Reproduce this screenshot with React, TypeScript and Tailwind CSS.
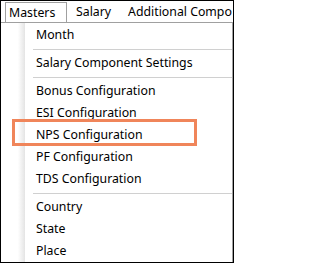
const font = { fontFamily: '"Noto Sans", "Open Sans", sans-serif' };

type Entry = { label: string } | { sep: true };

const entries: Entry[] = [
  { label: "Month" },
  { sep: true },
  { label: "Salary Component Settings" },
  { sep: true },
  { label: "Bonus Configuration" },
  { label: "ESI Configuration" },
  { label: "NPS Configuration" },
  { label: "PF Configuration" },
  { label: "TDS Configuration" },
  { sep: true },
  { label: "Country" },
  { label: "State" },
  { label: "Place" },
];

const App = () => {
  return (
    <div
      className="relative w-[234px] h-[263px] overflow-hidden bg-white border border-black text-black text-[12.3px] box-border"
      style={font}
    >
      {/* menu bar */}
      <div className="flex items-end h-[21px] pl-[4px] whitespace-nowrap overflow-hidden">
        <div className="relative z-10 -mb-px h-[21px] w-[62px] shrink-0 flex items-center pl-[3px] bg-white border-l border-t border-r border-[#a0a0a0]">
          Masters
        </div>
        <div className="h-[20px] shrink-0 flex items-center ml-[9px]">Salary</div>
        <div className="h-[20px] shrink-0 flex items-center ml-[17px]">
          Additional Compo
        </div>
      </div>
      {/* dropdown */}
      <div className="flex border-t border-r border-[#a0a0a0] h-[241px] pt-px">
        <div className="w-[24px] shrink-0 -mt-px bg-gradient-to-r from-white from-70% to-[#e4e4e4]" />
        <div className="flex-1 flex flex-col">
          {entries.map((e, i) =>
            "sep" in e ? (
              <div key={i} className="h-[6px] flex items-center pl-[8px]">
                <div className="h-px w-full bg-[#d0d0d0]" />
              </div>
            ) : (
              <div
                key={i}
                className="h-[22px] shrink-0 flex items-center pl-[11px] whitespace-nowrap"
              >
                {e.label}
              </div>
            )
          )}
        </div>
      </div>
      {/* highlight */}
      <div className="absolute left-[11px] top-[118px] w-[185px] h-[27px] border-[3px] border-[#f0855a]" />
    </div>
  );
};

export default App;
